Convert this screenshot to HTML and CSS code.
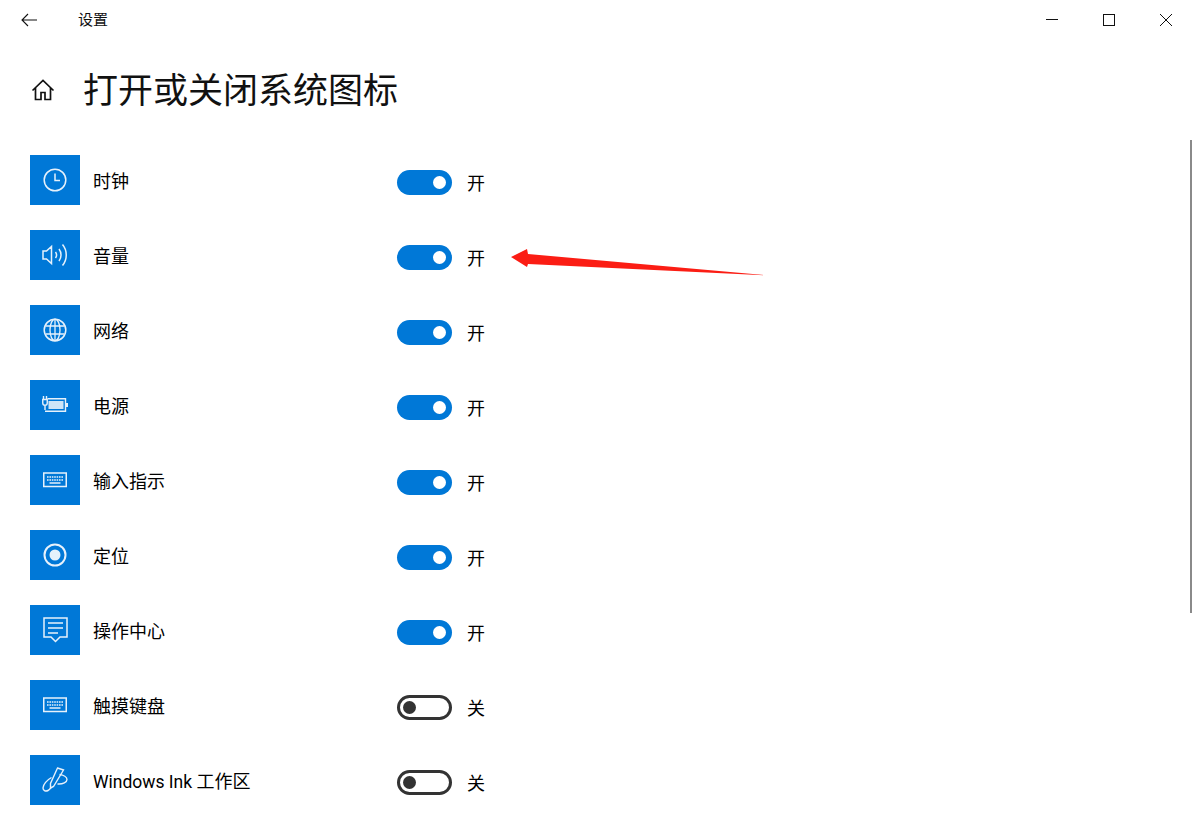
FILE: index.html
```html
<!DOCTYPE html>
<html lang="zh-CN">
<head>
    <meta charset="UTF-8">
    <title>设置</title>
    <link rel="stylesheet" href="styles.css">
</head>
<body>
    <svg class="defs" width="0" height="0">
        <symbol id="keyboard" viewBox="0 0 24 24">
            <rect x=".75" y="5" width="22.500" height="13.500" fill="none" stroke="currentColor" stroke-width="1.500"/>
            <path d="M4 9h16M4 12h16" stroke="currentColor" stroke-width="1.500" stroke-dasharray="1.600 .8"/>
            <path d="M6.500 15h11" stroke="currentColor" stroke-width="1.500"/>
        </symbol>
    </svg>

    <!-- Title bar -->
    <header class="titlebar">
        <div class="titlebar-left">
            <svg class="back-icon" width="16" height="14" viewBox="0 0 16 14"><path d="M7 1 1 7l6 6M1 7h15" fill="none" stroke="#111" stroke-width="1.100"/></svg>
            <span class="app-name">设置</span>
        </div>
        <div class="window-btns">
            <svg width="12" height="12" viewBox="0 0 12 12"><path d="M0 5.500h12" stroke="#111" stroke-width="1"/></svg>
            <svg width="12" height="12" viewBox="0 0 12 12"><rect x=".5" y=".5" width="11" height="11" fill="none" stroke="#111"/></svg>
            <svg width="12" height="12" viewBox="0 0 12 12"><path d="M0 0l12 12M12 0 0 12" stroke="#111" stroke-width="1"/></svg>
        </div>
    </header>

    <!-- Heading -->
    <div class="page-head">
        <svg class="home-icon" width="24" height="24" viewBox="0 0 24 24"><path d="M1.500 12.500 12 2.500l10.500 10M4.500 10v11.500h5.500v-7h4v7h5.500V10" fill="none" stroke="#111" stroke-width="1.700"/></svg>
        <h1 class="page-title">打开或关闭系统图标</h1>
    </div>

    <!-- Icon list -->
    <main class="icon-list">
        <div class="row">
            <span class="tile"><svg width="24" height="24" viewBox="0 0 24 24"><circle cx="12" cy="12" r="10.800" fill="none" stroke="currentColor" stroke-width="1.500"/><path d="M12 5.500v7h5" fill="none" stroke="currentColor" stroke-width="1.500"/></svg></span>
            <span class="label">时钟</span>
            <span class="toggle on"></span>
            <span class="state">开</span>
        </div>
        <div class="row">
            <span class="tile"><svg width="26" height="24" viewBox="0 0 26 24"><path d="M1 8h3.500L9.500 3.500v17l-5-4.500H1z" fill="none" stroke="currentColor" stroke-width="1.500"/><path d="M13.500 9c1.300 1.800 1.300 4.200 0 6M17 6c2.700 3.500 2.700 8.500 0 12M20.500 1.500c5 6 5 15 0 21" fill="none" stroke="currentColor" stroke-width="1.500"/></svg></span>
            <span class="label">音量</span>
            <span class="toggle on"></span>
            <span class="state">开</span>
        </div>
        <div class="row">
            <span class="tile"><svg width="24" height="24" viewBox="0 0 24 24"><circle cx="12" cy="12" r="10.800" fill="none" stroke="currentColor" stroke-width="1.500"/><ellipse cx="12" cy="12" rx="5" ry="10.800" fill="none" stroke="currentColor" stroke-width="1.300"/><path d="M12 1v22M2.500 8h19M2.500 16h19" fill="none" stroke="currentColor" stroke-width="1.300"/></svg></span>
            <span class="label">网络</span>
            <span class="toggle on"></span>
            <span class="state">开</span>
        </div>
        <div class="row">
            <span class="tile"><svg width="26" height="18" viewBox="0 0 26 18"><path d="M1.500 0v3.500M4.500 0v3.500M.75 3.500h4.500v3.500a2.250 2.250 0 0 1-4.500 0zM3 9v5" fill="none" stroke="currentColor" stroke-width="1.400"/><path d="M5.500 2.800h18v12.400H3" fill="none" stroke="currentColor" stroke-width="1.400"/><rect x="6.500" y="5" width="15" height="8" fill="currentColor" opacity=".9"/><rect x="24" y="7" width="2" height="4" fill="currentColor"/></svg></span>
            <span class="label">电源</span>
            <span class="toggle on"></span>
            <span class="state">开</span>
        </div>
        <div class="row">
            <span class="tile"><svg width="24" height="24"><use href="#keyboard"/></svg></span>
            <span class="label">输入指示</span>
            <span class="toggle on"></span>
            <span class="state">开</span>
        </div>
        <div class="row">
            <span class="tile"><svg width="24" height="24" viewBox="0 0 24 24"><circle cx="12" cy="12" r="10.500" fill="none" stroke="currentColor" stroke-width="2"/><circle cx="12" cy="12" r="5.500" fill="currentColor"/></svg></span>
            <span class="label">定位</span>
            <span class="toggle on"></span>
            <span class="state">开</span>
        </div>
        <div class="row">
            <span class="tile"><svg width="25" height="26" viewBox="0 0 25 26"><path d="M1 1h23v19h-7l-4.500 4.500L8 20H1z" fill="none" stroke="currentColor" stroke-width="1.500"/><path d="M5 6h15M5 11h15M5 16h10" fill="none" stroke="currentColor" stroke-width="1.500"/></svg></span>
            <span class="label">操作中心</span>
            <span class="toggle on"></span>
            <span class="state">开</span>
        </div>
        <div class="row">
            <span class="tile"><svg width="24" height="24"><use href="#keyboard"/></svg></span>
            <span class="label">触摸键盘</span>
            <span class="toggle off"></span>
            <span class="state">关</span>
        </div>
        <div class="row">
            <span class="tile"><svg width="26" height="26" viewBox="0 0 26 26"><path d="M15.500 1 21.500 3 11.500 19.500 8.500 21 8.500 16.500z" fill="none" stroke="currentColor" stroke-width="1.400"/><path d="M9.500 10.500C5 13 1 17.500 1 21c0 3 3 3.500 5 2.500 2-1 2.500-2.500 3-3M17.500 7.500c4 .5 7.500 2.500 7.500 5s-4 5-9.500 4.500" fill="none" stroke="currentColor" stroke-width="1.400"/></svg></span>
            <span class="label"><span class="latin">Windows Ink </span>工作区</span>
            <span class="toggle off"></span>
            <span class="state">关</span>
        </div>
    </main>

    <!-- Overlays: scrollbar and the red annotation arrow -->
    <div class="scrollbar"></div>
    <svg class="arrow" width="1195" height="813" viewBox="0 0 1195 813"><polygon points="511,257 527,249 528,254 766.500,275.300 528,264 527,267" fill="#fb1d14"/></svg>
</body>
</html>
```

FILE: styles.css
```css
* {
    margin: 0;
    padding: 0;
    box-sizing: border-box;
}

html, body {
    height: 813px;
    overflow: hidden;
}

body {
    font-family: Roboto, "Noto Sans CJK SC", sans-serif;
    background: #fff;
    color: #000;
    position: relative;
}

.defs {
    display: block;
    height: 0;
}

/* Title bar */
.titlebar {
    display: flex;
    justify-content: space-between;
    align-items: center;
    height: 40px;
}

.titlebar-left {
    display: flex;
    align-items: center;
    padding-left: 21px;
}

.back-icon {
    margin-right: 41px;
}

.app-name {
    font-size: 15px;
    line-height: 40px;
    height: 40px;
    color: #111;
}

.window-btns {
    display: flex;
    gap: 45px;
    padding-right: 23px;
}

/* Heading */
.page-head {
    display: flex;
    align-items: center;
    height: 100px;
    padding: 0 0 0 31px;
}

.home-icon {
    margin-right: 28px;
}

.page-title {
    font-size: 35px;
    font-weight: 400;
    line-height: 104px;
    height: 100px;
    color: #111;
}

/* Rows */
.icon-list {
    padding: 15px 0 0 30px;
}

.row {
    display: flex;
    align-items: center;
    height: 75px;
    padding-bottom: 25px;
}

.tile {
    display: flex;
    align-items: center;
    justify-content: center;
    flex: none;
    width: 50px;
    height: 50px;
    background: #0078d7;
    color: #e6f1fb;
}

.label {
    width: 304px;
    margin-left: 13px;
    font-size: 18px;
    line-height: 50px;
    height: 50px;
    padding-top: 2px;
}

.latin {
    font-size: 17.500px;
}

.toggle {
    flex: none;
    width: 55px;
    height: 25px;
    border-radius: 13px;
    position: relative;
    top: 2px;
}

.toggle::after {
    content: "";
    position: absolute;
    top: 50%;
    width: 13px;
    height: 13px;
    margin-top: -6.500px;
    border-radius: 50%;
}

.toggle.on {
    background: #0078d7;
}

.toggle.on::after {
    right: 6px;
    background: #fff;
}

.toggle.off {
    border: 3px solid #333;
    background: #fff;
}

.toggle.off::after {
    left: 3px;
    background: #333;
}

.state {
    margin-left: 15px;
    font-size: 18px;
    position: relative;
    top: 2px;
}

/* Overlays */
.scrollbar {
    position: absolute;
    top: 140px;
    right: 3px;
    width: 2px;
    height: 473px;
    background: #8a8a8a;
}

.arrow {
    position: absolute;
    top: 0;
    left: 0;
    pointer-events: none;
}
```
